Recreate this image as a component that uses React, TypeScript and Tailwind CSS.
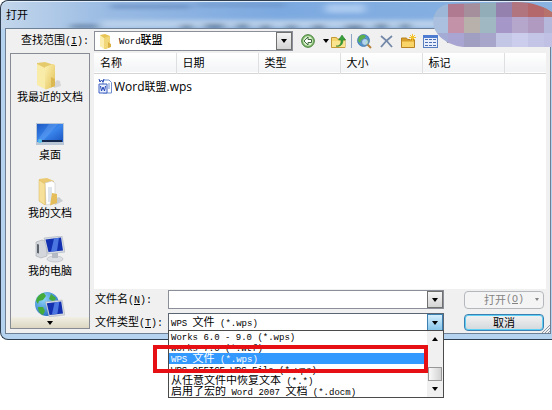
import { useState } from 'react';

const places = [
  { name: '我最近的文档', Icon: RecentIcon },
  { name: '桌面', Icon: DesktopIcon },
  { name: '我的文档', Icon: DocumentsIcon },
  { name: '我的电脑', Icon: ComputerIcon },
];

const columns = ['名称', '日期', '类型', '大小', '标记'];

const fileTypes = [
  'Works 6.0 - 9.0 (*.wps)',
  'Works 7.0 (*.wtf)',
  'WPS 文件 (*.wps)',
  'WPS-OFFICE WPS File (*.wps)',
  '从任意文件中恢复文本 (*.*)',
  '启用了宏的 Word 2007 文档 (*.docm)',
];

const mosaic = [
  ['#9db7d8', '#b07a90', '#a58f9c', '#93adb8', '#9581ad', '#b0757f', '#b5686c', '#b8726c'],
  ['#abc0df', '#c492a8', '#b8b0ab', '#a0b8c2', '#a598c8', '#b5a6cb', '#b09abf', '#b5b8da'],
  ['#a4acd6', '#a9a5d2', '#a09fc2', '#a7a6ca', '#c4c6e6', '#cccdec', '#c4c4e6', '#c0c0e4'],
];

// Latin glyphs are half the width of the Chinese ones
function Mixed({ text }: { text: string }) {
  const parts = text.match(/[\u4e00-\u9fff]+|[^\u4e00-\u9fff]+/g) || [];
  return (
    <>
      {parts.map((p, i) => (
        <span key={i} className={/[\u4e00-\u9fff]/.test(p) ? '' : "font-['Liberation_Mono',monospace] text-[9px]"}>{p}</span>
      ))}
    </>
  );
}

function Key({ text, letter, end = '' }: { text: string; letter: string; end?: string }) {
  return (
    <>
      {text}
      <span className="font-['Liberation_Mono',monospace] text-[10px]">(<u>{letter}</u>){end}</span>
    </>
  );
}

function Caret({ className = '' }: { className?: string }) {
  return (
    <svg className={className} width="6" height="4" viewBox="0 0 6 4" aria-hidden="true"><path d="M0 0h6L3 4z" fill="currentColor" /></svg>
  );
}

function RecentIcon() {
  return (
    <svg width="30" height="28" viewBox="0 0 30 28" aria-hidden="true">
      <defs>
        <linearGradient id="fold" x1="0" x2="1" y1="0" y2="1"><stop offset="0" stopColor="#fdf2b4" /><stop offset="1" stopColor="#e2c155" /></linearGradient>
      </defs>
      <path d="M18 23l4-5 3 1 1 5-7 2z" fill="#d6d6d6" />
      <path d="M2 1l8-1 9 3v21l-8 3-9-5z" fill="#e6cb6c" />
      <path d="M2 2l8 4v21l-8-4z" fill="#f9eba8" />
      <path d="M10 5l8-3 2 1v21l-9 3.500l-1-.5z" fill="url(#fold)" />
      <path d="M16 15l4 2v7l-4 1.500z" fill="#dcb850" />
    </svg>
  );
}

function DesktopIcon() {
  return (
    <svg width="30" height="28" viewBox="0 0 30 28" aria-hidden="true">
      <defs>
        <linearGradient id="desk" x1="0" x2="1" y1="0" y2="1"><stop offset="0" stopColor="#1c57c4" /><stop offset=".5" stopColor="#3a86ec" /><stop offset="1" stopColor="#1b54c0" /></linearGradient>
      </defs>
      <rect x="1" y="3" width="28" height="22" fill="#b9c6d6" />
      <rect x="2" y="4" width="26" height="18" fill="url(#desk)" />
      <path d="M2 21l12-17h9L8 21z" fill="#7db4f7" opacity=".3" />
      <rect x="7" y="20" width="20" height="2" fill="#13284a" />
      <circle cx="5" cy="21" r="2" fill="#57c0ea" />
    </svg>
  );
}

function DocumentsIcon() {
  return (
    <svg width="30" height="28" viewBox="0 0 30 28" aria-hidden="true">
      <path d="M18 22l6-3 4 4-8 4z" fill="#c9ccd0" />
      <path d="M4 1l8-1 7 3v20l-9 4-6-4z" fill="#eac971" />
      <path d="M10 5l7-2 3 2v20l-9 2z" fill="#fff" stroke="#c9c9c9" strokeWidth=".6" />
      <path d="M13 9h4v15h-4z" fill="#dfe5ec" />
      <path d="M4 2l6 4v21l-6-4z" fill="#f7e19a" stroke="#d9b65c" strokeWidth=".5" />
      <path d="M17 15l5 1v9l-7 2.500z" fill="#e5bd5b" />
    </svg>
  );
}

function Monitor() {
  return (
    <g>
      <path d="M9 2l18-2 3 16-17 2z" fill="#d8dde4" stroke="#9da6b2" strokeWidth=".5" />
      <path d="M10.500 3.500l15.500-2 2 13-14.500 1.500z" fill="#1230b0" />
      <path d="M19 2.500l5-.7-2 13-6 .8z" fill="#5f8cf0" opacity=".75" />
    </g>
  );
}

function ComputerIcon() {
  return (
    <svg width="30" height="28" viewBox="0 0 30 28" aria-hidden="true">
      <path d="M1 6l6-2 5 2v14l-6 2-5-2z" fill="#d3d6da" stroke="#9a9fa6" strokeWidth=".5" />
      <path d="M2 8l2 .6v9l-2-.6z" fill="#5d646d" />
      <ellipse cx="20" cy="23" rx="8" ry="3" fill="#dcdfe3" stroke="#a9aeb6" strokeWidth=".5" />
      <path d="M17 17h6v5h-6z" fill="#b5bbc4" />
      <Monitor />
    </svg>
  );
}

function NetworkIcon() {
  return (
    <svg width="30" height="28" viewBox="0 0 30 28" aria-hidden="true">
      <defs>
        <radialGradient id="globe" cx=".35" cy=".3" r=".8"><stop offset="0" stopColor="#8fd6fb" /><stop offset="1" stopColor="#1d66bd" /></radialGradient>
      </defs>
      <circle cx="12" cy="12" r="12" fill="url(#globe)" />
      <path d="M1 9C2 4 6 1 9 1l2 3-3 4-4 1-1 3zM3 15l5 0 2 4-2 4C5 22 3 19 3 15zM16 2l5 4-2 4-5-3z" fill="#45ac3c" />
      <g transform="translate(2 8) scale(.93)"><Monitor /></g>
      <ellipse cx="20" cy="26" rx="6" ry="1.500" fill="#c4cad2" />
    </svg>
  );
}

function SmallFolder() {
  return (
    <svg width="14" height="15" viewBox="0 0 14 15" aria-hidden="true">
      <path d="M1 1l5-1 5 2v11l-4 2-6-3z" fill="#e7c453" />
      <path d="M1 1l4 3v11l-4-3z" fill="#fbeeb0" />
      <path d="M5 4l6-2v11l-5 2H5z" fill="#f1d777" />
      <path d="M9 8l3 2v3l-3 1z" fill="#dbb143" />
    </svg>
  );
}

function WpsIcon() {
  return (
    <svg width="14" height="15" viewBox="0 0 14 15" aria-hidden="true">
      <path d="M5 1h6l2.500 2.500V14H5z" fill="#fff" stroke="#6f8fd0" />
      <path d="M10 5h2M10 7h2M10 9h2" stroke="#6f8fd0" />
      <path d="M1 5h8v9H1z" fill="#eaf0ff" stroke="#3c5fc0" />
      <path d="M2.500 7l1 5L5 8l1.500 4 1-5M1 0l1 3 1.500-2L5 3l1-3" fill="none" stroke="#2547b4" />
    </svg>
  );
}

function BackIcon() {
  return (
    <svg width="14" height="14" viewBox="0 0 14 14" aria-hidden="true">
      <circle cx="7" cy="7" r="6.300" fill="#8cc276" stroke="#3d7a33" />
      <circle cx="7" cy="7" r="4.700" fill="#d9efcf" />
      <path d="M3 7l4-4v2.500h3.500v3H7V11z" fill="#fff" stroke="#2f5c2c" strokeWidth=".9" />
    </svg>
  );
}

function UpIcon() {
  return (
    <svg width="15" height="15" viewBox="0 0 15 15" aria-hidden="true">
      <path d="M.5 3.500h5l1 1.500h7.500v8.500H.5z" fill="#f6d66f" stroke="#c49a36" />
      <path d="M1 7h13v6H1z" fill="#fbe490" />
      <path d="M5 12c4 0 5-2 5-6H7.500L11 1l3.500 5H12c0 5-3 7-7 6z" fill="#37a03a" stroke="#1f7424" strokeWidth=".5" />
    </svg>
  );
}

function SearchWebIcon() {
  return (
    <svg width="15" height="15" viewBox="0 0 15 15" aria-hidden="true">
      <circle cx="6.500" cy="6.500" r="6" fill="#4c94d4" stroke="#3b6fa8" strokeWidth=".7" />
      <path d="M2 3c2-3 6-2 7-1L7 5 4 6 3 9 1 7zM8 9l3-4 1 3-2 3z" fill="#5cb04b" />
      <circle cx="8" cy="8" r="3.500" fill="#dcefff" fillOpacity=".7" stroke="#5c86ab" />
      <path d="M10.500 10.500l3.500 3.500" stroke="#b5813b" strokeWidth="2" />
    </svg>
  );
}

function DeleteIcon() {
  return (
    <svg width="13" height="13" viewBox="0 0 13 13" aria-hidden="true"><path d="M1 1c4 3 8 7 11 11M12 1C8 4 4 8 1 12" fill="none" stroke="#7388a8" strokeWidth="1.800" /></svg>
  );
}

function NewFolderIcon() {
  return (
    <svg width="15" height="15" viewBox="0 0 15 15" aria-hidden="true">
      <path d="M.5 4h5l1 1.500h7V13.500H.5z" fill="#d99f2b" stroke="#b98222" />
      <path d="M1 7.500h12V13H1z" fill="#f9d468" />
      <path d="M11.500 0v7M8 3.500h7M9 1l5 5M14 1L9 6" stroke="#f5c32c" />
    </svg>
  );
}

function ViewsIcon() {
  return (
    <svg width="15" height="13" viewBox="0 0 15 13" aria-hidden="true">
      <rect x=".5" y=".5" width="14" height="12" fill="#e9f0fc" stroke="#5a7fc0" />
      <path d="M0 0h15v3H0z" fill="#4d7cd0" />
      <path d="M2 4.500h3M6 4.500h3M10 4.500h3M2 7.500h3M6 7.500h3M10 7.500h3M2 10.500h3M6 10.500h3M10 10.500h3" stroke="#4a6fb5" />
    </svg>
  );
}

// Blurred desktop showing through the glass frame
function Glass() {
  return (
    <svg className="h-7 w-full" viewBox="0 0 552 28" preserveAspectRatio="none" aria-hidden="true">
      <defs>
        <filter id="soft" x="-10%" y="-50%" width="120%" height="200%"><feGaussianBlur stdDeviation="4 2" /></filter>
        <linearGradient id="glass" x1="0" x2="1"><stop offset="0" stopColor="#c3d6eb" /><stop offset=".2" stopColor="#98bae3" /><stop offset=".5" stopColor="#7ca9e0" /><stop offset="1" stopColor="#8ab3e2" /></linearGradient>
      </defs>
      <rect width="552" height="28" fill="url(#glass)" />
      <g filter="url(#soft)">
        <rect x="100" y="18" width="360" height="8" fill="#b9d0ea" />
        <rect x="325" y="2" width="40" height="9" fill="#abcaf0" />
        <path d="M110 3h80v3h-80zM195 2h90v2h-90z" fill="#6389bd" />
        <path d="M180 23h12v4h-12zM204 22h20v4h-20zM236 22h12v4h-12zM260 23h10v4h-10zM286 23h10v4h-10zM312 23h12v4h-12zM345 23h18v4h-18zM375 22h12v4h-12zM400 22h10v4h-10zM70 23h28v3H70z" fill="#577494" />
      </g>
    </svg>
  );
}

function Mosaic() {
  return (
    <svg className="absolute top-0 right-0" width="119" height="46" viewBox="0 0 119 46" aria-hidden="true">
      <clipPath id="blob"><path d="M0 20C1 10 7 4 16 3L50 2 82 1C100 1 112 6 119 11V46H30C14 44 0 34 0 20z" /></clipPath>
      <g clipPath="url(#blob)">
        {mosaic.map((row, y) =>
          row.map((c, x) => <rect key={`${x}-${y}`} x={x * 16 - 1} y={y * 16} width="16" height="16" fill={c} />)
        )}
      </g>
    </svg>
  );
}

const arrowButton = 'flex w-4 shrink-0 items-center justify-center border border-[#707070] bg-linear-to-b from-[#f4f4f4] to-[#d4d4d4]';

export default function App() {
  const [fileName, setFileName] = useState('');
  const [type, setType] = useState(fileTypes[2]);

  return (
    <div className="min-h-screen bg-white">
      <div className="relative rounded-lg rounded-r-none border border-r-0 border-[#2f3e50] bg-[#b5d3ee] pr-px pb-[5px] pl-1 font-['Liberation_Sans','Noto_Sans_CJK_SC',sans-serif] text-[11px] leading-4 text-black">
        <div className="absolute inset-x-0 top-0 h-7 overflow-hidden rounded-tl-lg border-t border-white/60"><Glass /></div>
        <h1 className="relative flex h-[27px] items-center pl-px text-[11px]">打开</h1>

        <main className="relative border border-[#6d8096] bg-[#f0f0f0] pr-1 pb-px pl-1">
          <div className="flex h-6 items-center">
            <label htmlFor="folder" className="w-[84px] shrink-0 pl-[11px] whitespace-nowrap"><Key text="查找范围" letter="I" end=":" /></label>
            <div className="relative flex h-5 min-w-0 flex-1 items-center border border-[#8b8f97] bg-white pl-1">
              <SmallFolder />
              <span className="pointer-events-none absolute left-6 font-medium"><Mixed text="Word联盟" /></span>
              <select id="folder" className="min-w-0 flex-1 appearance-none text-transparent outline-none"><option>Word联盟</option></select>
              <span className={`${arrowButton} h-full`}><Caret /></span>
            </div>
            <div className="flex w-[253px] shrink-0 items-center pl-2">
              <button aria-label="后退"><BackIcon /></button>
              <button aria-label="后退列表" className="mr-[2px] ml-2"><Caret /></button>
              <button aria-label="向上一级"><UpIcon /></button>
              <span className="mx-[5px] h-[14px] w-px bg-[#8ea5c8]" />
              <button aria-label="搜索网页"><SearchWebIcon /></button>
              <button aria-label="删除" className="mx-2"><DeleteIcon /></button>
              <button aria-label="新建文件夹"><NewFolderIcon /></button>
              <button aria-label="视图" className="mx-[7px]"><ViewsIcon /></button>
              <button aria-label="视图列表"><Caret /></button>
            </div>
          </div>

          <div className="flex items-start gap-1">
            <nav className="flex h-[276px] w-20 shrink-0 flex-col border border-[#868b94]">
              <ul className="min-h-0 flex-1 overflow-hidden pt-1">
                {places.map(({ name, Icon }) => (
                  <li key={name}>
                    <button className="flex w-full flex-col items-center pt-1 pb-3 leading-[14px]"><Icon />{name}</button>
                  </li>
                ))}
                <li><button aria-label="网上邻居" className="flex w-full justify-center pt-[2px]"><NetworkIcon /></button></li>
              </ul>
              <button aria-label="更多位置" className="flex h-[11px] items-center justify-center bg-linear-to-b from-[#f1efe4] to-[#dcd7c2]"><Caret /></button>
            </nav>

            <div className="min-w-0 flex-1">
              <div className="h-[236px] bg-white">
                <table className="w-full table-fixed">
                  <thead>
                    <tr className="h-5 border-b border-[#d5d5d5] bg-linear-to-b from-white to-[#f3f4f6] text-left">
                      {columns.map((c) => <th key={c} className="w-[82px] border-r border-[#dedfe1] py-0 pl-[6px] font-normal">{c}</th>)}
                      <td />
                    </tr>
                  </thead>
                  <tbody>
                    <tr className="h-[27px]">
                      <td colSpan={6} className="pl-1">
                        <span className="flex items-center gap-[2px]"><WpsIcon /><span className="font-['Open_Sans','Noto_Sans_CJK_SC',sans-serif] text-[12px]">Word<span className="text-[11px]">联盟</span>.wps</span></span>
                      </td>
                    </tr>
                  </tbody>
                </table>
              </div>

              <div className="flex items-center pt-px">
                <label htmlFor="name" className="w-[74px] shrink-0 pl-px whitespace-nowrap"><Key text="文件名" letter="N" end=":" /></label>
                <div className="flex h-[19px] min-w-0 flex-1 border border-[#8b8f97] bg-white">
                  <input id="name" value={fileName} onChange={(e) => setFileName(e.target.value)} className="min-w-0 flex-1 px-1 outline-none" />
                  <button aria-label="最近的文件名" className={arrowButton}><Caret /></button>
                </div>
                <button className="relative mr-[2px] ml-5 flex h-[18px] w-20 shrink-0 items-center justify-center rounded-sm border border-[#b4b8bd] bg-[#f4f4f4] text-[#838383]">
                  <Key text="打开" letter="O" />
                  <svg className="absolute right-1" width="4" height="3" viewBox="0 0 4 3" aria-hidden="true"><path d="M0 0h4L2 3z" fill="#838383" /></svg>
                </button>
              </div>

              <div className="flex items-center pt-1">
                <label htmlFor="type" className="w-[74px] shrink-0 pl-px whitespace-nowrap"><Key text="文件类型" letter="T" end=":" /></label>
                <div className="relative min-w-0 flex-1">
                  <div className="relative flex h-[19px] items-center border border-[#5c6672] bg-white">
                    <span className="pointer-events-none absolute left-[2px]"><Mixed text={type} /></span>
                    <select id="type" value={type} onChange={(e) => setType(e.target.value)} className="min-w-0 flex-1 appearance-none text-transparent outline-none">
                      {fileTypes.map((t) => <option key={t}>{t}</option>)}
                    </select>
                    <span className="flex h-full w-4 items-center justify-center border border-[#3c7fb1] bg-linear-to-b from-[#d6effc] to-[#86c5ea]"><Caret /></span>
                  </div>

                  <div className="absolute top-[17px] z-10 flex w-full border border-[#4a4a4a] bg-white">
                    <ul role="listbox" aria-label="文件类型" className="min-w-0 flex-1">
                      {fileTypes.map((t) => (
                        <li key={t} role="option" aria-selected={t === type} onClick={() => setType(t)}
                          className={`h-[11px] overflow-hidden pl-[2px] leading-[11px] whitespace-nowrap ${t === type ? 'bg-[#3399ff] text-white' : ''}`}>
                          <Mixed text={t} />
                        </li>
                      ))}
                    </ul>
                    <div className="flex w-4 flex-col items-center bg-[#f0f0f0] py-[6px]">
                      <Caret className="rotate-180" />
                      <span className="mt-auto mb-[6px] h-[14px] w-[14px] border border-[#979797] bg-linear-to-r from-[#fafafa] to-[#d2d2d2]" />
                      <Caret />
                    </div>
                    <div className="pointer-events-none absolute top-[14px] right-[15px] -left-4 h-7 border-4 border-[#e60f14]" />
                  </div>
                </div>
                <button className="mr-[2px] ml-5 flex h-[17px] w-20 shrink-0 items-center justify-center rounded-sm border border-[#3c7fb1] bg-linear-to-b from-[#f2f2f2] to-[#d3d8dc] shadow-[inset_0_0_0_1px_#5fd0f5]">取消</button>
              </div>
            </div>
          </div>
          <svg className="absolute right-0 bottom-0" width="8" height="8" viewBox="0 0 8 8" aria-hidden="true"><path d="M0 8l8-8M3 8l5-5M6 8l2-2" stroke="#8d99a8" /></svg>
        </main>
        <Mosaic />
      </div>
    </div>
  );
}
